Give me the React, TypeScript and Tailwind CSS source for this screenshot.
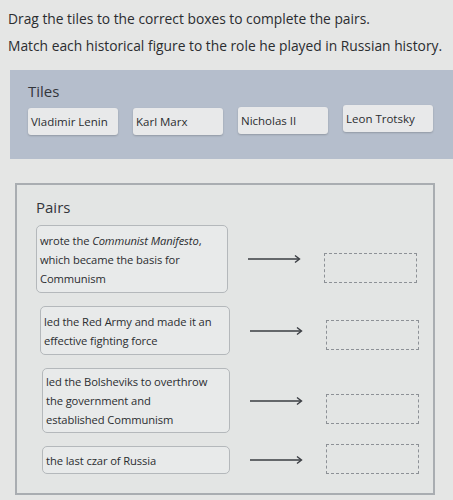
const tiles = ["Vladimir Lenin", "Karl Marx", "Nicholas II", "Leon Trotsky"];

type Pair = { text: React.ReactNode; box: string; target: string };

const pairs: Pair[] = [
  {
    text: (
      <>
        wrote the <i>Communist Manifesto</i>,<br />
        which became the basis for
        <br />
        Communism
      </>
    ),
    box: "h-[68px] w-[192px]",
    target: "mt-[18px]",
  },
  {
    text: (
      <>
        led the Red Army and made it an
        <br />
        effective fighting force
      </>
    ),
    box: "h-[49px] w-[190px] ml-[4px]",
    target: "mt-[8px]",
  },
  {
    text: (
      <>
        led the Bolsheviks to overthrow
        <br />
        the government and
        <br />
        established Communism
      </>
    ),
    box: "h-[65px] w-[188px] ml-[6px]",
    target: "mt-[17px]",
  },
  {
    text: <>the last czar of Russia</>,
    box: "h-[28px] w-[188px] ml-[6px]",
    target: "-mt-[2px]",
  },
];

function Arrow() {
  return (
    <svg width="54" height="10" viewBox="0 0 54 10" className="shrink-0">
      <line x1="0" y1="5" x2="51" y2="5" stroke="#3a3d42" strokeWidth="1.3" />
      <path d="M47 1.5 L51.5 5 L47 8.5" fill="none" stroke="#3a3d42" strokeWidth="1.4" />
    </svg>
  );
}

export default function App() {
  return (
    <div
      className="w-[453px] h-[500px] overflow-hidden bg-[#e5e6e5] text-[#2b2d30]"
      style={{ fontFamily: '"Open Sans", sans-serif' }}
    >
      <div className="pl-[8px] pt-[5px] text-[13.8px] leading-[27px] whitespace-nowrap">
        <p>Drag the tiles to the correct boxes to complete the pairs.</p>
        <p>Match each historical figure to the role he played in Russian history.</p>
      </div>

      {/* tile tray */}
      <div className="mt-[11px] ml-[10px] h-[89px] bg-[#b5becc] pl-[18px] pt-[11px]">
        <div className="text-[15px] leading-[20px] text-[#33363b]">Tiles</div>
        <div className="mt-[7px] flex gap-[15px]">
          {tiles.map((t, i) => (
            <div
              key={t}
              className={
                "h-[27px] w-[90px] rounded-[3px] bg-[#e8e9ea] pl-[3px] text-[11.5px] leading-[27px] whitespace-nowrap shadow-[0_1px_2px_rgba(0,0,0,0.2)] " +
                (i === 3 ? "-mt-[3px]" : i === 2 ? "-mt-[1px]" : "")
              }
            >
              {t}
            </div>
          ))}
        </div>
      </div>

      {/* pairs area */}
      <div className="mt-[24px] ml-[15px] w-[420px] h-[312px] border-2 border-[#a9adb1] bg-[#e3e5e4] pl-[19px] pt-[11px]">
        <div className="text-[15px] leading-[22px] text-[#33363b]">Pairs</div>
        <div className="mt-[7px] flex flex-col gap-[13px]">
          {pairs.map((p, i) => (
            <div key={i} className="flex items-center">
              <div
                className={
                  "flex items-center rounded-[5px] border border-[#b4b8bb] bg-[#e8eaea] px-[3px] text-[11.2px] leading-[19px] tracking-[-0.1px] whitespace-nowrap " +
                  p.box
                }
              >
                <div>{p.text}</div>
              </div>
              <div className="ml-[20px] flex w-[54px] items-center">
                <Arrow />
              </div>
              <div className={"ml-[22px] h-[30px] w-[93px] border border-dashed border-[#8d9196] " + p.target} />
            </div>
          ))}
        </div>
      </div>
    </div>
  );
}
